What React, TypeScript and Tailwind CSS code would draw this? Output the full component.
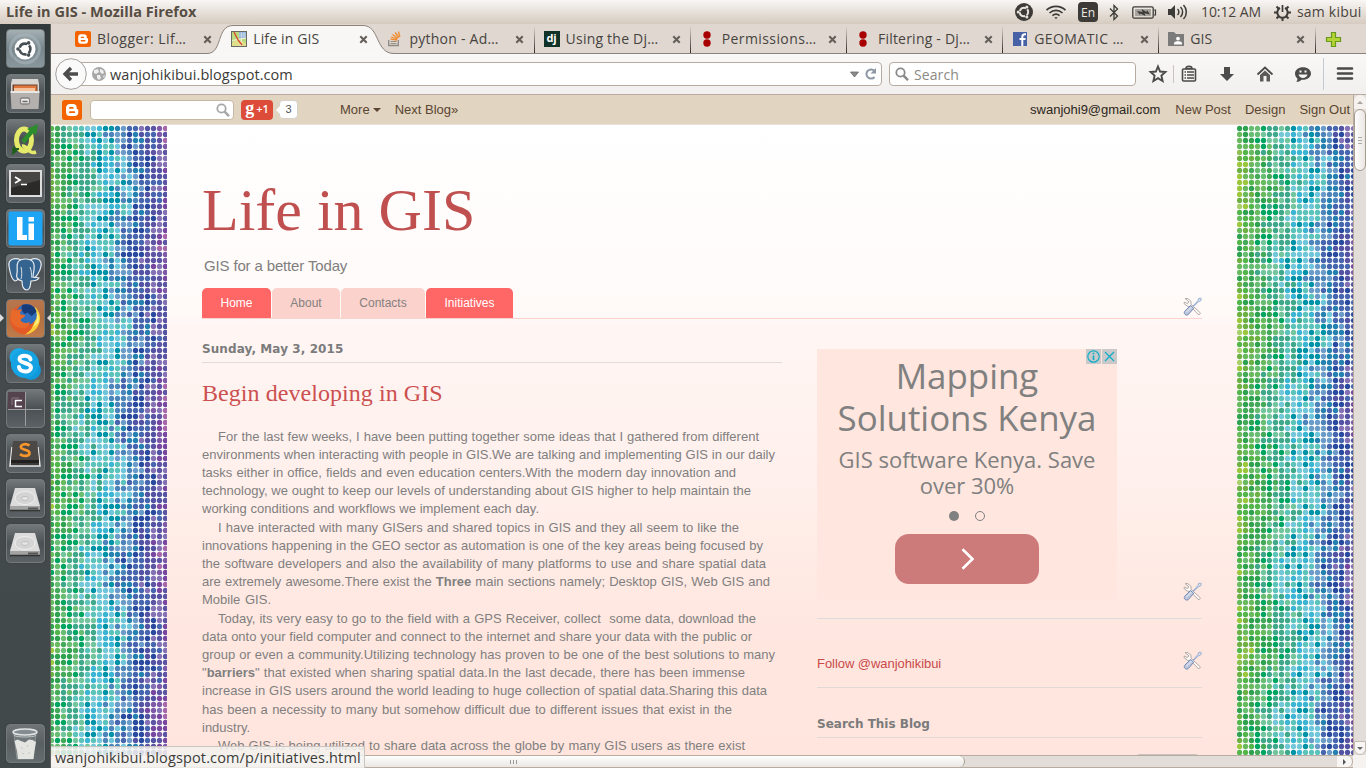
import React from "react";

/* ---------- dotted wallpaper ---------- */
const palette = [
  "#a9cf6a", "#8bbf50", "#9cc63c", "#6fb044", "#53b54a", "#69b95f", "#2ea24f", "#45a95a", "#69bd72", "#00a562", "#3fa78a",
  "#72c59c", "#41a98b", "#5cc3bb", "#72c7d8", "#3bb5d3", "#0092a6", "#5cc3bb", "#6fc5da", "#4d85bb", "#6b9bc9", "#2582b0",
  "#4866af", "#2a4a9f", "#4866af", "#5453a3", "#8572b4", "#5d54a4", "#7848a0", "#7f5aa8", "#a768a9",
];
const hash = (a: number, b: number) => {
  const s = Math.sin(a * 127.1 + b * 311.7) * 43758.5453;
  return s - Math.floor(s);
};

function Dots({ width, x0, shift }: { width: number; x0: number; shift: number }) {
  const dots: React.ReactElement[] = [];
  for (let r = 0; r < 105; r++) {
    for (let c = 0; c < 21; c++) {
      const wave = Math.cos(((r * 6 - 58) / 152) * 2 * Math.PI) * 1.4;
      const t = 5.6 + (c - shift) * 1.17 - wave + (hash(c + shift, r) - 0.5) * 4.4;
      const i = Math.max(0, Math.min(palette.length - 1, Math.round(t)));
      dots.push(<circle key={r * 21 + c} cx={x0 + c * 6} cy={3.5 + r * 6} r={2.65} fill={palette[i]} />);
    }
  }
  return (
    <svg width={width} height={630} className="block shrink-0 bg-[#fbfdfd]">
      {dots}
    </svg>
  );
}

/* ---------- favicons and small icons ---------- */
const BloggerIcon = ({ size }: { size: number }) => (
  <svg width={size} height={size} viewBox="0 0 20 20" className="block shrink-0">
    <rect width="20" height="20" rx="2.5" fill="#f56300" />
    <path d="M8 4h3.2a3.6 3.6 0 0 1 3.5 3.5v.9c.1.6.4.7 1 .8.5.1.6.4.6.9v2.200a3.700 3.700 0 0 1-3.700 3.700H7.800A3.700 3.700 0 0 1 4 12.300V7.700A3.700 3.700 0 0 1 8 4z" fill="#fff" />
    <path d="M7.900 7.900h2.900M7.900 12.200h4.400" stroke="#f56300" strokeWidth="1.700" strokeLinecap="round" />
  </svg>
);
const MapIcon = () => (
  <svg width="16" height="16" viewBox="0 0 16 16" className="block shrink-0">
    <rect x=".5" y=".5" width="15" height="15" fill="#b9d97c" stroke="#6a6a60" />
    <rect x="8" y="1" width="7" height="6" fill="#8fb0d6" />
    <path d="M8 3h7M8 5h7M10.500 1v6M13 1v6" stroke="#dce6f2" strokeWidth=".6" />
    <path d="M1 12l5-4 9 4v3H1z" fill="#e0e08c" />
    <path d="M1 9.500L9 8l6-1M9 15L11 7" stroke="#f4f4e4" strokeWidth="1" fill="none" />
    <path d="M3 1l4 8 4 5" stroke="#d9432e" strokeWidth="1.300" fill="none" />
  </svg>
);
const StackIcon = () => (
  <svg width="16" height="16" viewBox="0 0 16 16" className="block shrink-0" fill="none">
    <path d="M1.700 9v5.500h9.600V9" stroke="#8d8a86" strokeWidth="1.300" />
    <path d="M3.500 12.500h6M3.500 10.500h6" stroke="#9c917f" strokeWidth="1.100" />
    <path d="M3.500 8.200l6.500 1M4 6l6.300 2.200M5.500 3.500l5.300 3.800M8.200 1.500l3.600 5M11.400.5l1.500 5.500" stroke="#f08b2d" strokeWidth="1.300" />
  </svg>
);
const DjIcon = () => (
  <div className="flex h-4 w-4 shrink-0 items-center justify-center bg-[#113228] font-['Open_Sans',sans-serif] text-[11px] font-bold leading-none text-white">
    <span className="-mt-0.5">dj</span>
  </div>
);
const RedDots = () => (
  <svg width="16" height="16" viewBox="0 0 16 16" className="block shrink-0">
    <circle cx="7" cy="4" r="3.700" fill="#a80000" />
    <circle cx="7" cy="12" r="3.700" fill="#a80000" />
  </svg>
);
const FbIcon = () => (
  <svg width="16" height="16" viewBox="0 0 16 16" className="block shrink-0">
    <rect x="1" y="1" width="14" height="14" fill="#4661a6" />
    <path d="M14 3.200h-1.200c-1.800 0-2.500 1.100-2.500 2.700V15M7.500 8h6" stroke="#fff" strokeWidth="2" fill="none" />
  </svg>
);
const FolderUser = () => (
  <svg width="16" height="16" viewBox="0 0 16 16" className="block shrink-0">
    <path d="M0 1h6l2 2h8v12H0z" fill="#7b7b7b" />
    <circle cx="10" cy="7.600" r="1.900" fill="#fff" />
    <path d="M6 13.500v-1.200c0-1.500 2-2 4-2s4 .5 4 2v1.200z" fill="#fff" />
  </svg>
);
const CloseX = () => (
  <svg width="9" height="9" viewBox="0 0 9 9" className="block shrink-0">
    <path d="M1.300 1.300l6.400 6.400M7.700 1.300L1.300 7.700" stroke="#655f59" strokeWidth="2.100" />
  </svg>
);

/* ---------- title bar ---------- */
function TitleBar() {
  return (
    <div className="flex h-6 w-full items-center bg-gradient-to-b from-[#f8f6f4] to-[#d6cbc0] pl-1.5 font-['Open_Sans','Noto_Sans',sans-serif]">
      <div className="w-[1009px] whitespace-nowrap text-[14.500px] font-bold leading-6 tracking-[0.020px] text-[#564d43]">Life in GIS - Mozilla Firefox</div>
      <svg width="18" height="18" viewBox="0 0 18 18" className="block shrink-0">
        <circle cx="9" cy="9" r="9" fill="#3c3b37" />
        <circle cx="9" cy="9" r="4.200" fill="none" stroke="#e8e2dc" strokeWidth="2" strokeDasharray="7.300 1.500" strokeDashoffset="3.600" />
        <circle cx="3.200" cy="9" r="1.500" fill="#e8e2dc" />
        <circle cx="11.900" cy="4" r="1.500" fill="#e8e2dc" />
        <circle cx="11.900" cy="14" r="1.500" fill="#e8e2dc" />
      </svg>
      <svg width="22" height="16" viewBox="0 0 22 16" className="ml-3 block shrink-0" fill="none" stroke="#3c3b37" strokeWidth="1.700">
        <path d="M1.500 6.200a13.500 13.500 0 0 1 19 0M4.500 9a9.500 9.500 0 0 1 13 0M7.400 11.700a5.500 5.500 0 0 1 7.200 0" />
        <path d="M9.300 13.300h3.400L11 15.300z" fill="#3c3b37" stroke="none" />
      </svg>
      <div className="ml-[11px] flex h-5 w-5 shrink-0 items-center justify-center rounded-sm bg-[#3c3b37] pt-px text-[12px] leading-none text-[#eee8e2]">En</div>
      <svg width="12" height="17" viewBox="0 0 12 17" className="ml-2.5 block shrink-0" fill="none" stroke="#3c3b37" strokeWidth="1.300">
        <path d="M2 4.500l7.500 7.500L6 15.500v-14L9.500 5 2 12.500" />
      </svg>
      <svg width="25" height="13" viewBox="0 0 25 13" className="ml-3 block shrink-0">
        <rect x=".8" y=".8" width="20.400" height="11.400" rx="1.500" fill="none" stroke="#3c3b37" strokeWidth="1.300" />
        <rect x="3" y="3" width="16" height="7" fill="#a7a29c" />
        <path d="M22 4h1.500v5H22" fill="none" stroke="#3c3b37" strokeWidth="1.200" />
        <path d="M5 5l5.500 1L9.500 3l5 3 .5-2 3 4.500-5.500-1.200 1 2.700-5-2.500-.5 1.500z" fill="#3c3b37" />
      </svg>
      <svg width="21" height="16" viewBox="0 0 21 16" className="ml-[11px] block shrink-0" fill="none" stroke="#3c3b37" strokeWidth="1.500">
        <path d="M0 5h3l4-4v14l-4-4H0z" fill="#3c3b37" stroke="none" />
        <path d="M9.500 5a4 4 0 0 1 0 6M12.500 3a7 7 0 0 1 0 10M15.500 1a10 10 0 0 1 0 14" />
      </svg>
      <div className="ml-3 w-[62px] -translate-y-px whitespace-nowrap text-[14px] tracking-[-0.1px] text-[#4a443d]">10:12 AM</div>
      <svg width="17" height="17" viewBox="0 0 17 17" className="ml-[11px] block shrink-0" fill="none" stroke="#3c3b37">
        <path d="M6 3.900a5.200 5.200 0 1 0 5 0" strokeWidth="2" />
        <path d="M8.500 1v7" strokeWidth="1.700" />
        <path d="M0 8.500h3M14 8.500h3M2.500 2.500l2 2M14.500 2.500l-2 2M2.500 14.500l2-2M14.500 14.500l-2-2M8.500 14v3" strokeWidth="2" />
      </svg>
      <div className="ml-1.5 -translate-y-px whitespace-nowrap text-[14px] tracking-[0.2px] text-[#4a443d]">sam kibui</div>
    </div>
  );
}

/* ---------- launcher ---------- */
function Tile({ children, className = "" }: { children: React.ReactNode; className?: string }) {
  return (
    <div className={"flex h-[39px] w-[39px] shrink-0 items-center justify-center rounded-[4px] border border-[#747a7c] bg-gradient-to-b shadow-[0_0_1px_#222] " + className}>
      {children}
    </div>
  );
}
const dark = "from-[#73787b] via-[#4a5053] to-[#5c6265]";
const Drive = () => (
  <svg width="34" height="28" viewBox="0 0 34 28">
    <path d="M7 3h20l5 18H2z" fill="#dcdcdc" />
    <ellipse cx="17" cy="13" rx="10" ry="6.500" fill="#d4d4d4" stroke="#eeeeee" />
    <ellipse cx="17" cy="13.500" rx="3.500" ry="2" fill="#e6e6e6" stroke="#bdbdbd" />
    <path d="M2 21h30v4.500H2z" fill="#a3a3a3" />
    <path d="M2 25.500h30" stroke="#333" strokeWidth="1.500" />
    <path d="M20 22.500h10v2H20z" fill="#555" />
  </svg>
);
function Launcher() {
  return (
    <div className="flex h-[744px] w-[51px] shrink-0 flex-col items-start gap-1.5 border-r border-[#62625f] bg-gradient-to-b from-[#31393a] via-[#454b4d] to-[#41484a] pl-[5.500px] pt-[5px]">
      <Tile className="from-[#a5b0b4] via-[#76868b] to-[#8a989d]">
        <svg width="36" height="36" viewBox="0 0 36 36">
          <path d="M18 4a14 14 0 0 1 13 20M31 24a14 14 0 0 1-24 2M6 26A14 14 0 0 1 18 4" fill="none" stroke="#a9b6bb" strokeWidth="3" opacity=".6" />
          <circle cx="18" cy="18" r="10.500" fill="#fff" />
          <circle cx="18" cy="18" r="5.400" fill="none" stroke="#454f53" strokeWidth="2.600" strokeDasharray="9.300 2" strokeDashoffset="4.700" />
          <circle cx="11" cy="18" r="1.800" fill="#454f53" />
          <circle cx="21.600" cy="11.900" r="1.800" fill="#454f53" />
          <circle cx="21.600" cy="24.100" r="1.800" fill="#454f53" />
        </svg>
      </Tile>
      <Tile className={dark}>
        <svg width="32" height="34" viewBox="0 0 32 34">
          <path d="M3 2h26l1 5v8H2V7z" fill="#d9d6d3" />
          <path d="M3.500 7.500h25V16h-25z" fill="#6a4430" />
          <path d="M5 8.500h22.500V16H5z" fill="#e0763c" />
          <path d="M5 11h21v5H5z" fill="#f4c29c" />
          <path d="M1.500 15.500h29L29.500 32h-27z" fill="#b3b0ad" />
          <path d="M1.500 14h29v2h-29z" fill="#e9e7e5" />
          <rect x="11.500" y="21" width="9" height="6" rx="1.500" fill="#ecebea" stroke="#85827f" strokeWidth="1.300" />
          <path d="M13.500 24.500h5" stroke="#666" strokeWidth="1.500" />
        </svg>
      </Tile>
      <Tile className={dark}>
        <svg width="36" height="36" viewBox="0 0 36 36">
          <ellipse cx="17" cy="19" rx="7.500" ry="11" fill="none" stroke="#e6ea6a" strokeWidth="5" />
          <path d="M15 25c6-1 6 9 14 6" stroke="#e6ea6a" strokeWidth="3.600" fill="none" />
          <path d="M16 21l9-11" stroke="#2c8d2c" strokeWidth="4.500" />
          <path d="M31 3l-2 11-9-6z" fill="#2c8d2c" />
          <path d="M7 27l2 3-3 2zM5 28h7" stroke="#1e5f1e" strokeWidth="2" />
        </svg>
      </Tile>
      <Tile className={dark}>
        <svg width="33" height="27" viewBox="0 0 33 27">
          <rect x="1" y="1" width="31" height="25" fill="#2b2a29" stroke="#dedede" strokeWidth="2" />
          <path d="M2 2h29v8L2 18z" fill="#484645" />
          <path d="M6 7l5 3-5 3M12 14.500h6" fill="none" stroke="#fff" strokeWidth="1.700" />
        </svg>
      </Tile>
      <Tile className={dark}>
        <svg width="35" height="35" viewBox="0 0 35 35">
          <rect x=".5" y=".5" width="34" height="34" rx="2" fill="#1ea4f4" />
          <path d="M9 6h5.500v18H19v5H9zM20.500 6H26v4.500h-5.500zM20.500 12.500H26V29h-5.500z" fill="#fff" />
        </svg>
      </Tile>
      <Tile className={dark}>
        <svg width="36" height="36" viewBox="0 0 36 36" stroke="#e9edf0" strokeWidth="1.200" fill="#356490">
          <path d="M14 4C8 1 1 3 2 10c1 7 3 14 6 15 2 0 4-3 6-5z" />
          <path d="M23 4c6-3 12-1 11 6-1 6-5 12-8 12l-4-2z" />
          <path d="M11 6c3-4 12-4 15 0 3 5 0 10 0 15 2 1 5 0 6 1-2 3-5 3-8 3-1 4 0 8-4 9-4 0-5-4-5-9-5-1-6-4-5-8 1-4-1-7 1-11z" />
          <path d="M14 11c1 4 1 9 0 12M23 11c2 4 1 8 2 11" fill="none" strokeWidth=".9" />
        </svg>
      </Tile>
      <div className="relative">
        <Tile className="from-[#b8764e] via-[#b0703f] to-[#c07b4c]">
          <svg width="34" height="34" viewBox="0 0 34 34">
            <circle cx="17" cy="17.500" r="15" fill="#e35a26" />
            <path d="M27 5c6 5 6.500 14 2.500 20-2.500 4-7 7-12.500 7.500 8-5 11-12 9-21z" fill="#f8cf3a" />
            <circle cx="18.500" cy="12.500" r="10.500" fill="#2f6fbd" />
            <path d="M14 3c7-2.500 13 1 14.500 7l-5 4-4-3.500-3 1.500-3-4z" fill="#173a78" />
            <path d="M4.500 6.500l3 2.500c2-1.500 4.500-2 7-1.300-2.500 1.500-3 3-1.800 4.800l4.300.6c.2 2.400-3.500 3-4.500 5 1.500 3.500 6 3.600 9.500 2-1 5-5 7-9 6C6 25 2 20 2.500 14.500 2.700 11 3.300 8.500 4.500 6.500z" fill="#e9692a" />
            <path d="M28 9c2.500 6 .5 13-4 16 3-1 5-2.500 6.500-5 1-4 0-8-2.500-11z" fill="#fdf08a" />
          </svg>
        </Tile>
        <span className="absolute -left-[6px] top-[15px] h-0 w-0 border-y-4 border-l-4 border-y-transparent border-l-[#ddd]" />
        <span className="absolute left-[41px] top-[15px] h-0 w-0 border-y-4 border-r-4 border-y-transparent border-r-[#ddd]" />
      </div>
      <Tile className={dark}>
        <svg width="34" height="34" viewBox="0 0 34 34">
          <circle cx="11" cy="10.500" r="9.500" fill="#1ba8e6" />
          <circle cx="23" cy="23" r="10" fill="#1098da" />
          <circle cx="17" cy="17" r="14" fill="#16a3e4" />
          <path d="M22.500 12.500c-1-5-11-5-11-.5 0 5 11.500 3 11.500 8.500 0 5.500-11.500 5.500-12-.5" fill="none" stroke="#fff" strokeWidth="4" strokeLinecap="round" />
        </svg>
      </Tile>
      <Tile className={dark}>
        <svg width="36" height="36" viewBox="0 0 36 36">
          <rect x="1" y="1" width="17" height="17" fill="#54424c" />
          <path d="M18.500 1v34M1 18.500h34" stroke="#9b9fa0" />
          <path d="M12 7H5v7" fill="none" stroke="#87797f" />
          <path d="M15 9.500H8.500v6H15" fill="none" stroke="#fff" strokeWidth="1.500" />
        </svg>
      </Tile>
      <Tile className={dark}>
        <svg width="34" height="30" viewBox="0 0 34 30">
          <path d="M4 8L2 27h30L30 8" fill="#3b3b3b" stroke="#e8e8e8" strokeWidth="1.500" />
          <path d="M5 2h24l2 19H3z" fill="#4b4845" />
          <path d="M3 21h28v3H3z" fill="#22201f" />
          <path d="M21.500 6.500c-4-2.500-9.500-1-8.500 2.200.8 2.500 8.500 1.800 8.500 5.200 0 3.500-6 4-9.500 1.200" fill="none" stroke="#f6962c" strokeWidth="2.700" />
        </svg>
      </Tile>
      <Tile className={dark}><Drive /></Tile>
      <Tile className={dark}><Drive /></Tile>
      <div className="flex-1" />
      <Tile className="mb-[5px] from-[#6e7476] via-[#5a6062] to-[#656c6f]">
        <svg width="30" height="34" viewBox="0 0 30 34">
          <path d="M4 7h22l-3 25H7z" fill="#70787b" stroke="#8a9193" />
          <path d="M4.500 14l3-1.500 3.500 1.500 4 1.500 4-3 3.500.5 3.500 2-1.500 9-1 8H8l-1-8z" fill="#e4e4e1" />
          <path d="M11 20l2 2M18 18l-1 2M12 26l2 1M20 25l-2 2" fill="none" stroke="#c6c6c2" />
          <ellipse cx="15" cy="5" rx="12" ry="3" fill="#868d90" stroke="#e1e4e4" strokeWidth="1.600" />
          <path d="M4 8.500c4 2 18 2 22 0" fill="none" stroke="#c3c8c9" />
        </svg>
      </Tile>
    </div>
  );
}

/* ---------- browser chrome ---------- */
const tabs: { icon: React.ReactNode; label: string; fit: string }[] = [
  { icon: <BloggerIcon size={16} />, label: "Blogger: Lif…", fit: "tracking-[0.45px]" },
  { icon: <MapIcon />, label: "Life in GIS", fit: "tracking-[0.15px]" },
  { icon: <StackIcon />, label: "python - Ad…", fit: "tracking-[0.25px]" },
  { icon: <DjIcon />, label: "Using the Dj…", fit: "tracking-[0.22px]" },
  { icon: <RedDots />, label: "Permissions…", fit: "tracking-[0.4px]" },
  { icon: <RedDots />, label: "Filtering - Dj…", fit: "tracking-[0.22px]" },
  { icon: <FbIcon />, label: "GEOMATIC …", fit: "tracking-[0.45px]" },
  { icon: <FolderUser />, label: "GIS", fit: "tracking-[0px]" },
];
function TabStrip() {
  return (
    <div className="flex h-[30px] items-stretch border-b border-[#8c847c] bg-[#dfd7d0] pl-[15px] font-['Open_Sans','Noto_Sans',sans-serif]">
      {tabs.map((t, i) => (
        <div key={t.label} className={"relative flex w-[156.200px] shrink-0 items-center pl-[9px] " + (i === 1 ? "z-10" : "")}>
          {i === 1 && (
            <svg width="188" height="30" viewBox="0 0 188 30" className="absolute -left-[15px] top-0 max-w-none">
              <path d="M0 30v-.5c16 0 9-28 26-28h130c17 0 12 28 31 28v.5z" fill="#f8f7f5" />
              <path d="M0 29.500c16 0 9-28 26-28h130c17 0 12 28 31 28" fill="none" stroke="#8c847c" />
            </svg>
          )}
          <div className="relative">{t.icon}</div>
          <div className={"relative ml-1.5 w-[106px] whitespace-nowrap text-[14px] text-[#474440] " + t.fit}>{t.label}</div>
          <div className="relative mt-px"><CloseX /></div>
          {i > 1 && <span className="absolute bottom-0 right-0 h-[27px] w-px bg-gradient-to-b from-transparent to-[#2e2a26]" />}
        </div>
      ))}
      <svg width="18" height="18" viewBox="0 0 18 18" className="ml-[9px] mt-[7px] block">
        <path d="M6.500 1.500h4v5h5v4h-5v5h-4v-5h-5v-4h5z" fill="#b4d335" stroke="#6a9a1d" strokeWidth="1.200" />
      </svg>
    </div>
  );
}

const Magnifier = ({ c }: { c: string }) => (
  <svg width="14" height="14" viewBox="0 0 14 14" className="block shrink-0" fill="none" stroke={c}>
    <circle cx="5.500" cy="5.500" r="4.200" strokeWidth="1.800" />
    <path d="M8.600 8.600l4.400 4.600" strokeWidth="2.400" />
  </svg>
);

function NavBar() {
  return (
    <div className="flex h-[41px] items-center border-b border-[#b8aca0] bg-gradient-to-b from-[#f9f8f6] to-[#f2f0ee] pl-1 font-['Open_Sans','Noto_Sans',sans-serif]">
      <svg width="32" height="32" viewBox="0 0 32 32" className="relative z-10 block shrink-0">
        <circle cx="16" cy="16" r="15.300" fill="#fbfafa" stroke="#a3a09c" />
        <path d="M16 10l-6 6 6 6M10.500 16H23" fill="none" stroke="#4c4c4c" strokeWidth="3.300" />
      </svg>
      <div className="-ml-3 flex h-6 w-[807px] items-center rounded-sm border border-[#b8aca0] bg-white pl-4">
        <svg width="14" height="14" viewBox="0 0 14 14" className="block shrink-0">
          <circle cx="7" cy="7" r="7" fill="#a7a7a7" />
          <path d="M2 3l4-1 1 3-3 2-2-1zM8 2l3 1 1 3-2 1-2-2zM5 8l3 0 1 3-2 2-2-2zM11 9l2-1-1 3z" fill="#efefef" />
        </svg>
        <div className="ml-1 w-[740px] pt-px text-[14.500px] tracking-[0.06px] text-[#3c3b37]">wanjohikibui.blogspot.com</div>
        <svg width="28" height="14" viewBox="0 0 28 14" className="block shrink-0">
          <path d="M.5 5h8l-4 5z" fill="#8b8b8b" stroke="#6a6a6a" strokeWidth=".8" />
          <path d="M24.500 10a4.600 4.600 0 1 1 0-6" fill="none" stroke="#8e98a4" strokeWidth="2" />
          <path d="M26 1v5.500h-5.500z" fill="#8e98a4" />
        </svg>
      </div>
      <div className="ml-[7px] flex h-6 w-[247px] items-center rounded-sm border border-[#b8aca0] bg-white pl-[5px]">
        <Magnifier c="#8a8a8a" />
        <span className="ml-[5px] text-[14px] tracking-[0.1px] text-[#8b8984]">Search</span>
      </div>
      <svg width="218" height="34" viewBox="0 0 218 34" className="ml-2.5 block shrink-0" fill="none" stroke="#4a4a4a">
        <path d="M12 9.500l2.100 5 5.300.5-4 3.600 1.200 5.400-4.600-2.900L7.400 24l1.200-5.400-4-3.600 5.300-.5z" strokeWidth="1.900" />
        <path d="M27.500 8v18" stroke="#c9c4bf" />
        <rect x="36.500" y="12" width="13" height="12" rx="1" strokeWidth="1.600" />
        <path d="M40 11.500c0-3 6-3 6 0z" strokeWidth="1.600" />
        <path d="M38.500 15h1.500M41 15h7M38.500 18h1.500M41 18h7M38.500 21h1.500M41 21h7" strokeWidth="1.300" />
        <path d="M78 10h6v7h4l-7 7-7-7h4z" fill="#4c4c4c" stroke="none" />
        <path d="M111.500 17.500L119 10.500l7.500 7" strokeWidth="1.800" />
        <path d="M114 18l5-4.500 5 4.500v6.500h-3.500V19h-3v5.500H114z" fill="#5a5a5a" stroke="none" />
        <path d="M157 10.300c4.500 0 8 2.700 8 6.200s-3.500 6.300-8 6.300l-1.500-.1c-2 2-4 2.200-5.500 2 1.200-.8 1.500-2 1.400-3.300-1.500-1-2.400-3-2.400-4.900 0-3.500 3.500-6.200 8-6.200z" fill="#4c4c4c" stroke="none" />
        <path d="M152.500 17.500c1 4.500 8 4.500 9 0z" fill="#f6f5f3" stroke="none" />
        <path d="M153.500 14.500h2M158.500 14.500h2" stroke="#f6f5f3" strokeWidth="1.800" />
        <path d="M177.500 1v32" stroke="#c3cbd2" />
        <path d="M192 11.500h14M192 16.500h14M192 21.500h14" strokeWidth="2.600" strokeLinecap="round" />
      </svg>
    </div>
  );
}

function BloggerBar() {
  return (
    <div className="flex h-[30px] items-center border-b border-[#ece3d6] bg-[#e1d4c0] pl-[11px] font-['Liberation_Sans',sans-serif] text-[13px] text-[#5a4632]">
      <BloggerIcon size={20} />
      <div className="ml-2 flex h-5 w-36 items-center justify-end rounded-sm border border-[#c5b8a5] bg-white pr-[3px]"><Magnifier c="#a7a7a7" /></div>
      <div className="ml-[7px] flex h-5 w-8 items-center justify-center gap-0.5 rounded-sm bg-[#dd4b39] text-white">
        <span className="-mt-1 font-['Liberation_Serif',serif] text-[18px] font-bold leading-none">g</span>
        <span className="-mt-0.5 font-['Open_Sans',sans-serif] text-[11px] font-semibold leading-none">+1</span>
      </div>
      <div className="relative ml-[6px] flex h-[19px] w-[19px] items-center justify-center rounded-sm border border-[#d5d2cc] bg-white text-[11px] leading-none text-[#555]">
        3
        <span className="absolute -left-[4px] top-[5px] h-0 w-0 border-y-4 border-r-4 border-y-transparent border-r-white" />
      </div>
      <span className="ml-[42px]">More</span>
      <span className="ml-[3px] h-0 w-0 border-x-4 border-t-4 border-x-transparent border-t-[#5a4632]" />
      <span className="ml-[14px]">Next Blog»</span>
      <div className="flex flex-1 justify-end gap-[14px] pr-[3px]">
        <span className="mr-px text-[#2b2622]">swanjohi9@gmail.com</span>
        <span>New Post</span>
        <span>Design</span>
        <span>Sign Out</span>
      </div>
    </div>
  );
}

/* ---------- page ---------- */
const Tools = () => (
  <svg width="19" height="19" viewBox="0 0 19 19" className="block shrink-0">
    <path d="M2 1.500l3 .2 3 2.600v3L17.500 16l-1.700 2-8.500-8.500-3-.3L1 6.500l.3-1.500L4 6.500l2-1.500z" fill="#fdf8f6" stroke="#b3aaa6" />
    <path d="M10 9l5-5.500.6-2L17.500 1l.8.800-.6 2-2 .7-5 5z" fill="#dfe8f5" stroke="#8ba3c9" strokeWidth=".9" />
    <path d="M1.500 14.500l6-6 3.200 2.800-5.700 6.500c-2 1-4.600-1-3.500-3.300z" fill="#bdc8dd" stroke="#7288b4" />
    <path d="M3.500 15l5-5" stroke="#e9eef7" />
  </svg>
);

/* Each line is set to its own measure; the first line of a paragraph is indented. */
const INDENT = 16;
type Line = { w: number; text: React.ReactNode; indent?: boolean };
const lines: Line[] = [
  { w: 557, indent: true, text: "For the last few weeks, I have been putting together some ideas that I gathered from different" },
  { w: 573, text: "environments when interacting with people in GIS.We are talking and implementing GIS in our daily" },
  { w: 534, text: "tasks either in office, fields and even education centers.With the modern day innovation and" },
  { w: 549, text: "technology, we ought to keep our levels of understanding about GIS higher to help maintain the" },
  { w: 337, text: "working conditions and workflows we implement each day." },
  { w: 537, indent: true, text: "I have interacted with many GISers and shared topics in GIS and they all seem to like the" },
  { w: 561, text: "innovations happening in the GEO sector as automation is one of the key areas being focused by" },
  { w: 564, text: "the software developers and also the availability of many platforms to use and share spatial data" },
  { w: 568, text: <>are extremely awesome.There exist the <b>Three</b> main sections namely; Desktop GIS, Web GIS and</> },
  { w: 69, text: "Mobile GIS." },
  { w: 554, indent: true, text: <>Today, its very easy to go to the field with a GPS Receiver, collect&nbsp; some data, download the</> },
  { w: 550, text: "data onto your field computer and connect to the internet and share your data with the public or" },
  { w: 573, text: "group or even a community.Utilizing technology has proven to be one of the best solutions to many" },
  { w: 543, text: <>"<b>barriers</b>" that existed when sharing spatial data.In the last decade, there has been immense</> },
  { w: 565, text: "increase in GIS users around the world leading to huge collection of spatial data.Sharing this data" },
  { w: 530, text: "has been a necessity to many but somehow difficult due to different issues that exist in the" },
  { w: 49, text: "industry." },
  { w: 543, indent: true, text: "Web GIS is being utilized to share data across the globe by many GIS users as there exist" },
];

function Post() {
  return (
    <div className="w-[580px] shrink-0 pt-[19px]">
      <div className="flex h-[25px] items-center border-b border-[#dddddd] pb-[3px] font-['DejaVu_Sans',sans-serif] text-[12px] font-bold tracking-[0.08px] text-[#7b7b7b]">Sunday, May 3, 2015</div>
      <div className="mt-[14px] h-8 whitespace-nowrap font-['Liberation_Serif',serif] text-[24px] leading-8 tracking-[0.06px] text-[#cc5050]">Begin developing in GIS</div>
      <div className="mt-[18.600px] whitespace-nowrap text-[13px] leading-[18.200px] text-[#7f7f7f]">
        {lines.map((l, i) => (
          <div
            key={i}
            className={"[text-align-last:justify] " + (l.indent ? "ml-4" : "")}
            style={{ width: l.indent ? l.w - INDENT : l.w }}
          >
            {l.text}
          </div>
        ))}
      </div>
    </div>
  );
}

function Sidebar() {
  return (
    <div className="ml-[35px] w-[385px] shrink-0 pt-[30px]">
      <div className="flex h-[270px] items-start justify-between border-b border-[#dcdcdc]">
        <div className="relative flex h-[250px] w-[300px] flex-col items-center bg-[#ffe6de] font-['Open_Sans',sans-serif] text-[#808080]">
          <div className="mt-[6px] text-center text-[34.900px] leading-[42px]">Mapping<br />Solutions Kenya</div>
          <div className="mt-[7px] text-center text-[22px] leading-[26px]">GIS software Kenya. Save<br />over 30%</div>
          <div className="mt-[13px] flex gap-4">
            <span className="h-2.5 w-2.5 rounded-full bg-[#808080]" />
            <span className="h-2.5 w-2.5 rounded-full border border-[#808080]" />
          </div>
          <div className="mt-[13px] flex h-[50px] w-36 items-center justify-center rounded-[14px] bg-[#cd7a7a]">
            <svg width="14" height="22" viewBox="0 0 14 22" className="ml-0.5">
              <path d="M1.500 1.200l10 9.800-10 9.800" fill="none" stroke="#fff" strokeWidth="2.600" />
            </svg>
          </div>
          <div className="absolute right-0 top-0 flex gap-px">
            <svg width="15" height="15" viewBox="0 0 15 15" className="bg-[#c9c9c9]" fill="none" stroke="#12adc8">
              <circle cx="7.500" cy="7.500" r="5.700" strokeWidth="1.200" />
              <path d="M7.500 6.500v4.500M7.500 3.700v1.600" strokeWidth="1.700" />
            </svg>
            <svg width="15" height="15" viewBox="0 0 15 15" className="bg-[#c9c9c9]" fill="none" stroke="#12adc8">
              <path d="M3 3l9 9M12 3l-9 9" strokeWidth="1.300" />
            </svg>
          </div>
        </div>
        <div className="mt-[233px]"><Tools /></div>
      </div>
      <div className="flex h-[69px] items-start justify-between border-b border-[#e2d9d6] pt-[32px]">
        <span className="mt-[3px] text-[13px] tracking-[-0.05px] text-[#c94a4a]">Follow @wanjohikibui</span>
        <Tools />
      </div>
      <div className="flex h-[50px] items-start border-b border-[#e2d9d6] pt-[27px] font-['DejaVu_Sans',sans-serif] text-[12px] font-bold text-[#7b7b7b]">Search This Blog</div>
      <div className="ml-[319px] mt-4 h-5 w-[63px] rounded-sm bg-[#c8c2c0]" />
    </div>
  );
}

const pageTabs = [
  { t: "Home", c: "w-[69px] bg-[#ff6666] text-white" },
  { t: "About", c: "w-[68px] bg-[#fbd3cc] text-[#858080]" },
  { t: "Contacts", c: "w-[84px] bg-[#fbd3cc] text-[#858080]" },
  { t: "Initiatives", c: "w-[87px] bg-[#ff6666] text-white" },
];

function Page() {
  return (
    <div className="h-[630px] w-[1070px] shrink-0 overflow-hidden bg-[linear-gradient(to_bottom,#ffffff_0px,#fffaf8_187px,#fff6f4_200px,#ffefeb_370px,#ffe8e1_480px,#ffe5dd_630px)] px-[35px] font-['Liberation_Sans',sans-serif]">
      <div className="h-[131px] pt-[50px] font-['Liberation_Serif',serif] text-[60px] leading-[70px] text-[#c05050]">Life in GIS</div>
      <div className="h-8 pl-0.5 text-[15px] leading-[20px] tracking-[-0.15px] text-[#7f7f7f]">GIS for a better Today</div>
      <div className="flex h-[31px] items-start gap-px border-b border-[#fbd3cc] text-[12px]">
        {pageTabs.map((p) => (
          <div key={p.t} className={"flex h-[30px] items-center justify-center rounded-t-[5px] " + p.c}>{p.t}</div>
        ))}
        <div className="ml-auto mt-[9px]"><Tools /></div>
      </div>
      <div className="flex">
        <Post />
        <Sidebar />
      </div>
    </div>
  );
}

function VScroll() {
  return (
    <div className="flex h-[660px] w-[13px] shrink-0 flex-col items-center border-l border-[#b8aca0] bg-[#e2ddd8]">
      <div className="flex h-[14px] w-full items-center justify-center rounded-t-full bg-[#f5f2f0]">
        <span className="h-0 w-0 border-x-[3px] border-b-[3px] border-x-transparent border-b-[#aaa49e]" />
      </div>
      <div className="flex h-[62px] w-full flex-col items-center justify-center gap-[2px] rounded-full border border-[#a79c91] bg-gradient-to-r from-white to-[#eae6e2]">
        <span className="h-px w-1 bg-[#aaa]" />
        <span className="h-px w-1 bg-[#aaa]" />
        <span className="h-px w-1 bg-[#aaa]" />
      </div>
      <div className="flex-1" />
      <div className="flex h-[14px] w-full items-center justify-center rounded-b-full border border-[#c4bab0] bg-[#f8f6f5]">
        <span className="h-0 w-0 border-x-[3px] border-t-[3px] border-x-transparent border-t-[#666]" />
      </div>
    </div>
  );
}

function HScroll() {
  return (
    <div className="flex h-[13px] w-full bg-[#f5f2f0]">
      <div className="flex h-full w-[1302px] justify-between border-y border-[#b8aca0] bg-[#e2ddd8]">
        <div className="flex h-full w-[914px] items-center justify-center gap-[2px] rounded-full border-r border-[#a79c91] bg-gradient-to-b from-white to-[#eae6e2] pl-3">
          <span className="h-1 w-px bg-[#999]" />
          <span className="h-1 w-px bg-[#999]" />
          <span className="h-1 w-px bg-[#999]" />
        </div>
        <div className="flex h-full w-4 items-center justify-center rounded-r-full border-r border-[#b8aca0] bg-[#f8f6f5]">
          <span className="h-0 w-0 border-y-[3px] border-l-[3px] border-y-transparent border-l-[#555]" />
        </div>
      </div>
    </div>
  );
}

export default function App() {
  return (
    <div className="relative h-[768px] w-[1366px] overflow-hidden bg-[#f2f0ee]">
      <TitleBar />
      <div className="flex">
        <Launcher />
        <div className="w-[1315px] shrink-0">
          <TabStrip />
          <NavBar />
          <div className="flex">
            <div className="w-[1302px] shrink-0">
              <BloggerBar />
              <div className="flex">
                <Dots width={116} x0={0.5} shift={0} />
                <Page />
                <Dots width={116} x0={2.5} shift={2} />
              </div>
            </div>
            <VScroll />
          </div>
          <HScroll />
        </div>
      </div>
      <div className="absolute bottom-0 left-[51px] flex h-[22px] w-[314px] items-center whitespace-nowrap border-r border-t border-[#c9c4bf] bg-[#f5f2f0]/85 pl-1 font-['Open_Sans','Noto_Sans',sans-serif] text-[14.500px] tracking-[0.130px] text-[#3c3b37]">
        wanjohikibui.blogspot.com/p/initiatives.html
      </div>
    </div>
  );
}
